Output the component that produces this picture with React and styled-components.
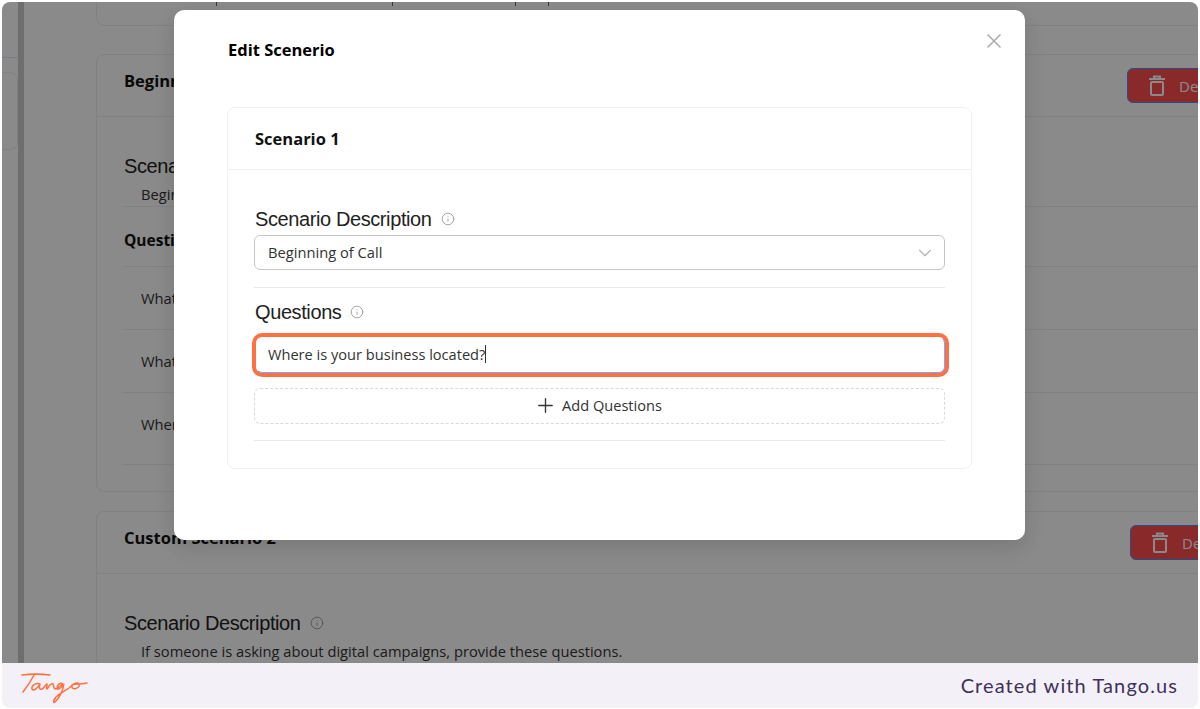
import React from "react";
import styled, { createGlobalStyle } from "styled-components";
import { Info, ChevronDown, Plus } from "lucide-react";

const GlobalStyle = createGlobalStyle`
  html, body {
    margin: 0;
    padding: 0;
    background: #ffffff;
  }
  * {
    box-sizing: border-box;
  }
`;

const Frame = styled.div`
  width: 1200px;
  height: 709px;
  padding: 2px 2px 1px;
  display: flex;
  flex-direction: column;
  background: #ffffff;
  overflow: hidden;
  font-family: "Open Sans", "Noto Sans", sans-serif;
`;

const Screen = styled.div`
  position: relative;
  height: 661px;
  flex-shrink: 0;
  display: flex;
  overflow: hidden;
  background: #ffffff;
  border-radius: 8px 8px 0 0;
`;

const Overlay = styled.div`
  position: absolute;
  inset: 0;
  background: rgba(0, 0, 0, 0.46);
`;

const Rail = styled.div`
  width: 16px;
  flex-shrink: 0;
  padding-top: 55px;
`;

const RailLine = styled.div`
  height: 15px;
  border-top: 1px solid #dfe3f5;
`;

const RailBox = styled.div`
  height: 78px;
  border: 1px solid #eeeeee;
  border-left: none;
  border-radius: 0 8px 8px 0;
`;

const Stripe = styled.div`
  width: 6px;
  flex-shrink: 0;
  background: #cccccc;
`;

const Main = styled.div`
  width: 1256px;
  flex-shrink: 0;
  padding-left: 72px;
`;

const TopCard = styled.div`
  height: 24px;
  margin-bottom: 28px;
  display: flex;
  align-items: flex-start;
  padding-left: 119px;
  border: 1px solid #eeeeee;
  border-top: none;
  border-radius: 0 0 8px 8px;
`;

const Tick = styled.span`
  width: 1px;
  height: 4px;
  margin-left: ${(p) => p.$gap}px;
  background: #666666;
`;

const Card = styled.div`
  height: ${(p) => p.$height}px;
  margin-bottom: 19px;
  border: 1px solid #eeeeee;
  border-radius: 8px;
`;

const CardHeader = styled.div`
  height: 62px;
  display: flex;
  justify-content: space-between;
  align-items: center;
  padding: 0 32px 0 27px;
  border-bottom: 1px solid #eeeeee;
`;

const CardTitle = styled.div`
  margin-bottom: 10px;
  font-size: 16.5px;
  font-weight: 700;
  color: #111111;
`;

const DeleteButton = styled.div`
  width: ${(p) => p.$width}px;
  height: 35px;
  display: flex;
  align-items: center;
  gap: 14px;
  padding-left: 21px;
  font-size: 15px;
  color: #ffffff;
  background: #ff4d4f;
  border: 1.5px solid #4a8cff;
  border-radius: 6px;
`;

const CardBody = styled.div`
  padding: 37px 0 0 26px;
`;

const Label = styled.div`
  height: 24px;
  display: flex;
  align-items: center;
  gap: 9px;
  padding-left: 1px;
  font-family: "Liberation Sans", Arial, sans-serif;
  font-size: 20px;
  letter-spacing: -0.4px;
  color: #222222;

  svg {
    color: #999999;
  }
`;

const Note = styled.div`
  height: 29px;
  padding: 6px 0 0 18px;
  font-size: 14.7px;
  color: #333333;
  border-bottom: ${(p) => (p.$plain ? "none" : "1px solid #eeeeee")};
`;

const QuestionsHead = styled.div`
  height: 60px;
  padding: 22px 0 0 1px;
  font-size: 15.5px;
  font-weight: 700;
  color: #111111;
  border-bottom: 1px solid #eeeeee;
`;

const QuestionRow = styled.div`
  height: ${(p) => p.$height}px;
  padding: 21px 0 0 18px;
  font-size: 14.7px;
  color: #333333;
  border-bottom: 1px solid #eeeeee;
`;

const Modal = styled.div`
  position: absolute;
  left: 172px;
  top: 8px;
  width: 851px;
  height: 530px;
  padding: 0 53px;
  background: #ffffff;
  border-radius: 10px;
  box-shadow: 0 6px 16px rgba(0, 0, 0, 0.08), 0 9px 28px rgba(0, 0, 0, 0.05);
`;

const ModalTitle = styled.div`
  height: 97px;
  padding: 29px 0 0 1px;
  font-size: 16.5px;
  font-weight: 700;
  line-height: 22px;
  color: #000000;
`;

const CloseButton = styled.div`
  position: absolute;
  top: 23px;
  right: 23px;
  display: flex;
  color: #aaaaaa;
`;

const InnerCard = styled.div`
  height: 362px;
  border: 1px solid #f0f0f0;
  border-radius: 8px;
`;

const InnerHeader = styled.div`
  height: 62px;
  display: flex;
  align-items: center;
  padding-left: 27px;
  font-size: 16.5px;
  font-weight: 700;
  color: #111111;
  border-bottom: 1px solid #f0f0f0;
`;

const InnerBody = styled.div`
  display: flex;
  flex-direction: column;
  padding: 37px 26px 0;
`;

const Select = styled.div`
  height: 35px;
  margin-top: 4px;
  display: flex;
  justify-content: space-between;
  align-items: center;
  padding: 0 8px 0 13px;
  font-size: 14.7px;
  color: #333333;
  border: 1px solid #c8c4c4;
  border-radius: 6px;

  span {
    padding-bottom: 2px;
  }

  svg {
    color: #b0b0b0;
  }
`;

const Divider = styled.div`
  height: 1px;
  margin: ${(p) => p.$margin};
  background: #e9e9ec;
`;

const FocusedInput = styled.div`
  height: 36px;
  margin: 13px 0 0 2px;
  display: flex;
  align-items: center;
  padding: 0 0 2px 11px;
  font-size: 14.6px;
  color: #333333;
  background: #ffffff;
  border: 1px solid #7aa9f7;
  border-top-color: #ffffff;
  border-left-color: #ffffff;
  border-radius: 6px;
  box-shadow: 0 0 0 4px #ff7043;
`;

const Caret = styled.span`
  width: 1px;
  height: 18px;
  background: #333333;
`;

const AddButton = styled.div`
  height: 36px;
  margin-top: 15px;
  display: flex;
  justify-content: center;
  align-items: center;
  gap: 5px;
  padding: 0 3px 2px 0;
  font-size: 14.6px;
  color: #333333;
  border: 1px dashed #d9d9d9;
  border-radius: 6px;
`;

const Footer = styled.div`
  height: 45px;
  flex-shrink: 0;
  display: flex;
  justify-content: space-between;
  align-items: center;
  padding: 0 20px 2px 18px;
  background: #f3f1f7;
  border-radius: 0 0 8px 8px;
`;

const FooterText = styled.div`
  font-family: Lato, "Open Sans", sans-serif;
  font-size: 20px;
  letter-spacing: 1.1px;
  color: #3f3059;
`;

const LogoMark = styled.svg`
  margin-top: 8px;
`;

const TrashIcon = () => (
  <svg width="16" height="21" viewBox="0 0 16 21" fill="none" stroke="currentColor" strokeWidth="2">
    <path d="M0 4h16M5 4V1.5h6V4" />
    <rect x="2" y="7" width="12" height="13" rx="1" />
  </svg>
);

const CloseIcon = () => (
  <svg width="16" height="16" viewBox="0 0 16 16" fill="none" stroke="currentColor" strokeWidth="1.5">
    <path d="M1.5 1.5l13 13M14.5 1.5l-13 13" />
  </svg>
);

const TangoLogo = () => (
  <LogoMark width="70" height="34" viewBox="0 0 70 34" fill="none" stroke="#ff7043" strokeWidth="1.5" strokeLinecap="round">
    <path d="M2 3C10 2 22 2 30 3" />
    <path d="M14 3C11 9 7 15 3 20" />
    <path d="M20 12C16 10 11 14 12 17C13 20 18 16 20 12C19 15 19 18 22 17C24 16 26 12 27 12C27 14 26 17 27 17C29 14 31 11 33 12C34 14 33 17 36 17C38 16 41 13 43 12C40 10 37 13 37 16C38 19 42 15 44 12C43 18 39 27 35 30C33 32 33 28 36 25C40 21 45 19 49 16C51 14 54 11 57 11C60 11 60 15 57 16C54 18 51 16 52 13C54 11 60 13 67 11" />
  </LogoMark>
);

const App = () => {
  return (
    <Frame>
      <GlobalStyle />
      <Screen>
        <Rail>
          <RailLine />
          <RailBox />
        </Rail>
        <Stripe />
        <Main>
          <TopCard>
            <Tick $gap={0} />
            <Tick $gap={175} />
            <Tick $gap={122} />
            <Tick $gap={32} />
          </TopCard>
          <Card $height={438}>
            <CardHeader>
              <CardTitle>Beginning of Call</CardTitle>
              <DeleteButton $width={120}>
                <TrashIcon />
                Delete
              </DeleteButton>
            </CardHeader>
            <CardBody>
              <Label>Scenario Description</Label>
              <Note>Beginning of Call</Note>
              <QuestionsHead>Questions</QuestionsHead>
              <QuestionRow $height={63}>What is your name?</QuestionRow>
              <QuestionRow $height={63}>What is your phone number?</QuestionRow>
              <QuestionRow $height={72}>Where is your business located?</QuestionRow>
            </CardBody>
          </Card>
          <Card $height={300}>
            <CardHeader>
              <CardTitle>Custom Scenario 2</CardTitle>
              <DeleteButton $width={117}>
                <TrashIcon />
                Delete
              </DeleteButton>
            </CardHeader>
            <CardBody>
              <Label>
                Scenario Description
                <Info size={14} strokeWidth={1.5} />
              </Label>
              <Note $plain>If someone is asking about digital campaigns, provide these questions.</Note>
            </CardBody>
          </Card>
        </Main>
        <Overlay />
        <Modal>
          <ModalTitle>Edit Scenerio</ModalTitle>
          <CloseButton>
            <CloseIcon />
          </CloseButton>
          <InnerCard>
            <InnerHeader>Scenario 1</InnerHeader>
            <InnerBody>
              <Label>
                Scenario Description
                <Info size={14} strokeWidth={1.5} />
              </Label>
              <Select>
                <span>Beginning of Call</span>
                <ChevronDown size={22} strokeWidth={1.2} />
              </Select>
              <Divider $margin="17px 0 12px" />
              <Label>
                Questions
                <Info size={14} strokeWidth={1.5} />
              </Label>
              <FocusedInput>
                Where is your business located?
                <Caret />
              </FocusedInput>
              <AddButton>
                <Plus size={23} strokeWidth={1.4} />
                Add Questions
              </AddButton>
              <Divider $margin="16px 0 0" />
            </InnerBody>
          </InnerCard>
        </Modal>
      </Screen>
      <Footer>
        <TangoLogo />
        <FooterText>Created with Tango.us</FooterText>
      </Footer>
    </Frame>
  );
};

export default App;
